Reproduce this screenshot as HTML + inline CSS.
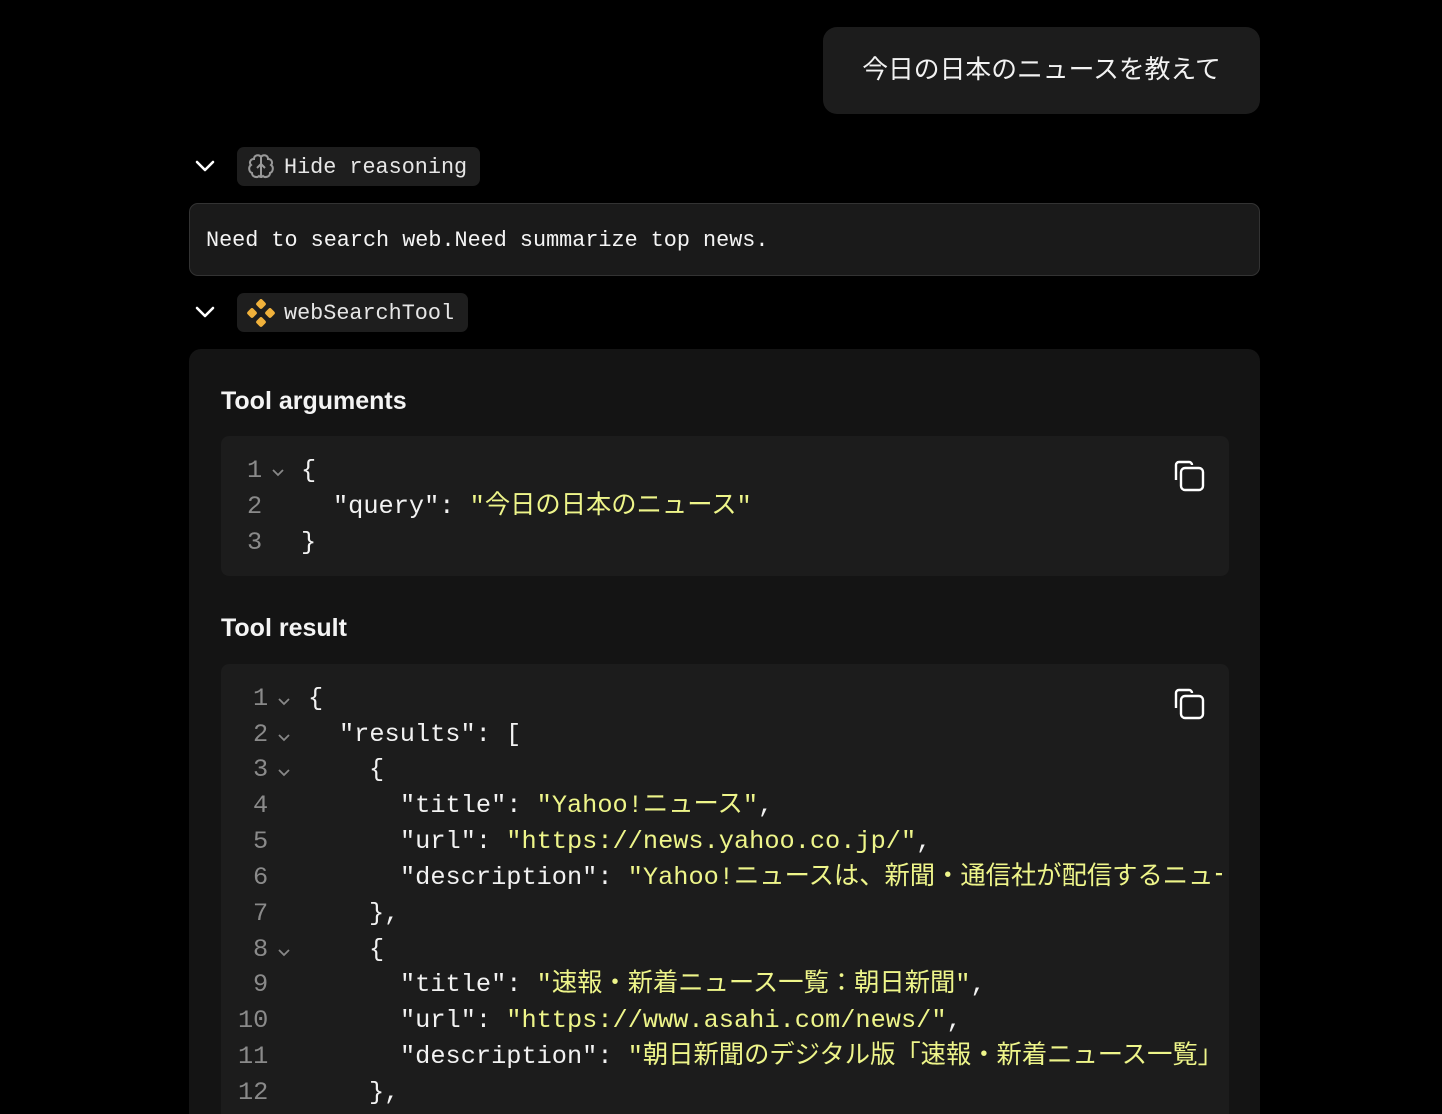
<!DOCTYPE html>
<html><head><meta charset="utf-8"><style>
*{margin:0;padding:0;box-sizing:border-box}
html,body{width:1442px;height:1114px;overflow:hidden}
body{background:#000;font-family:"Liberation Sans","Noto Sans CJK JP",sans-serif;color:#eee;position:relative}
.mono{font-family:"Liberation Mono","Noto Sans CJK JP",monospace}
.bubble{position:absolute;left:823px;top:27px;width:437px;height:87px;background:#1c1c1c;border-radius:14px;font-size:25.8px;line-height:87px;text-align:center;color:#f2f2f2}
.chev{position:absolute;left:194px;width:22px;height:14px}
.pill{position:absolute;left:237px;height:39px;background:#1e1e1e;border-radius:7px;font-size:21.8px;line-height:41px;color:#e6e6e6;padding-left:47px}
.reason{position:absolute;left:189px;top:203px;width:1071px;height:73px;background:#1a1a1a;border:1px solid #333;border-radius:9px;font-size:21.8px;line-height:73px;padding-left:16px;color:#f4f4f4}
.card{position:absolute;left:189px;top:349px;width:1071px;height:800px;background:#141414;border-radius:12px}
.h{position:absolute;left:221px;font-size:25px;font-weight:bold;color:#f4f4f4}
.code{position:absolute;left:221px;width:1008px;background:#1c1c1c;border-radius:8px;overflow:hidden}
.ln{position:absolute;height:36px;line-height:40px;font-size:25.3px;white-space:pre;color:#f2f2f2}
.n{color:#8a8a8a}
.s{color:#eef58a}
.copy{position:absolute;left:1172px;width:34px;height:34px}
</style></head><body>
<div class="bubble">今日の日本のニュースを教えて</div>

<svg class="chev" style="top:159px" viewBox="0 0 22 14"><path d="M3 3l8 8 8-8" stroke="#fff" stroke-width="2.6" fill="none" stroke-linecap="round" stroke-linejoin="round"/></svg>
<div class="pill mono" style="top:147px;width:243px">Hide reasoning</div>
<svg style="position:absolute;left:246px;top:152px" width="30" height="30" viewBox="0 0 30 30" fill="none" stroke="#999" stroke-width="2"><path d="M15 5c-2-3-7-2-7 2-4 0-5 4-3 6-3 2-2 7 1 8 0 4 5 5 7 3 1 1 2 1 2 1V5z"/><path d="M15 5c2-3 7-2 7 2 4 0 5 4 3 6 3 2 2 7-1 8 0 4-5 5-7 3-1 1-2 1-2 1"/><path d="M15 12l-4 4M15 12l4 4M15 12v13"/></svg>

<div class="reason mono">Need to search web.Need summarize top news.</div>

<svg class="chev" style="top:305px" viewBox="0 0 22 14"><path d="M3 3l8 8 8-8" stroke="#fff" stroke-width="2.6" fill="none" stroke-linecap="round" stroke-linejoin="round"/></svg>
<div class="pill mono" style="top:293px;width:231px">webSearchTool</div>
<svg style="position:absolute;left:247px;top:299px" width="28" height="28" viewBox="0 0 28 28" fill="#f0b13b"><rect x="10" y="1" width="8" height="8" rx="2" transform="rotate(45 14 5)"/><rect x="10" y="19" width="8" height="8" rx="2" transform="rotate(45 14 23)"/><rect x="1" y="10" width="8" height="8" rx="2" transform="rotate(45 5 14)"/><rect x="19" y="10" width="8" height="8" rx="2" transform="rotate(45 23 14)"/></svg>

<div class="card"></div>
<div class="h" style="top:387px">Tool arguments</div>
<div class="code" style="top:436px;height:140px"></div>
<div class="mono">
<div class="ln" style="left:247px;top:451px"><span class="n">1</span></div>
<div class="ln" style="left:247px;top:487px"><span class="n">2</span></div>
<div class="ln" style="left:247px;top:523px"><span class="n">3</span></div>
<div class="ln" style="left:301px;top:451px">{</div>
<div class="ln" style="left:333px;top:487px">"query": <span class="s">"今日の日本のニュース"</span></div>
<div class="ln" style="left:301px;top:523px">}</div>
</div>
<svg class="copy" style="top:459px" viewBox="0 0 34 34" fill="none" stroke="#fff" stroke-width="2.4"><rect x="9" y="9" width="22" height="22" rx="4"/><path d="M4 21V6a3 3 0 0 1 3-3h10a3 3 0 0 1 3 3"/></svg>

<div class="h" style="top:614px">Tool result</div>
<div class="code" style="top:664px;height:500px"></div>
<div class="mono" style="position:absolute;left:0;top:0;width:1222px;height:1114px;overflow:hidden">
<div class="ln n" style="left:253px;top:679px">1</div>
<div class="ln n" style="left:253px;top:715px">2</div>
<div class="ln n" style="left:253px;top:750px">3</div>
<div class="ln n" style="left:253px;top:786px">4</div>
<div class="ln n" style="left:253px;top:822px">5</div>
<div class="ln n" style="left:253px;top:858px">6</div>
<div class="ln n" style="left:253px;top:894px">7</div>
<div class="ln n" style="left:253px;top:930px">8</div>
<div class="ln n" style="left:253px;top:965px">9</div>
<div class="ln n" style="left:238px;top:1001px">10</div>
<div class="ln n" style="left:238px;top:1037px">11</div>
<div class="ln n" style="left:238px;top:1073px">12</div>
<div class="ln" style="left:308px;top:679px">{</div>
<div class="ln" style="left:339px;top:715px">"results": [</div>
<div class="ln" style="left:369px;top:750px">{</div>
<div class="ln" style="left:400px;top:786px">"title": <span class="s">"Yahoo!ニュース"</span>,</div>
<div class="ln" style="left:400px;top:822px">"url": <span class="s">"https://news.yahoo.co.jp/"</span>,</div>
<div class="ln" style="left:400px;top:858px">"description": <span class="s">"Yahoo!ニュースは、新聞・通信社が配信するニュース</span></div>
<div class="ln" style="left:369px;top:894px">},</div>
<div class="ln" style="left:369px;top:930px">{</div>
<div class="ln" style="left:400px;top:965px">"title": <span class="s">"速報・新着ニュース一覧：朝日新聞"</span>,</div>
<div class="ln" style="left:400px;top:1001px">"url": <span class="s">"https://www.asahi.com/news/"</span>,</div>
<div class="ln" style="left:400px;top:1037px">"description": <span class="s">"朝日新聞のデジタル版「速報・新着ニュース一覧」へ</span></div>
<div class="ln" style="left:369px;top:1073px">},</div>
</div>
<svg style="position:absolute;left:271px;top:468px" width="14" height="10" viewBox="0 0 14 10"><path d="M2 2l5 5 5-5" stroke="#888" stroke-width="1.8" fill="none"/></svg>
<svg style="position:absolute;left:277px;top:697px" width="14" height="10" viewBox="0 0 14 10"><path d="M2 2l5 5 5-5" stroke="#888" stroke-width="1.8" fill="none"/></svg>
<svg style="position:absolute;left:277px;top:733px" width="14" height="10" viewBox="0 0 14 10"><path d="M2 2l5 5 5-5" stroke="#888" stroke-width="1.8" fill="none"/></svg>
<svg style="position:absolute;left:277px;top:768px" width="14" height="10" viewBox="0 0 14 10"><path d="M2 2l5 5 5-5" stroke="#888" stroke-width="1.8" fill="none"/></svg>
<svg style="position:absolute;left:277px;top:948px" width="14" height="10" viewBox="0 0 14 10"><path d="M2 2l5 5 5-5" stroke="#888" stroke-width="1.8" fill="none"/></svg>
<svg class="copy" style="top:687px" viewBox="0 0 34 34" fill="none" stroke="#fff" stroke-width="2.4"><rect x="9" y="9" width="22" height="22" rx="4"/><path d="M4 21V6a3 3 0 0 1 3-3h10a3 3 0 0 1 3 3"/></svg>
</body></html>
